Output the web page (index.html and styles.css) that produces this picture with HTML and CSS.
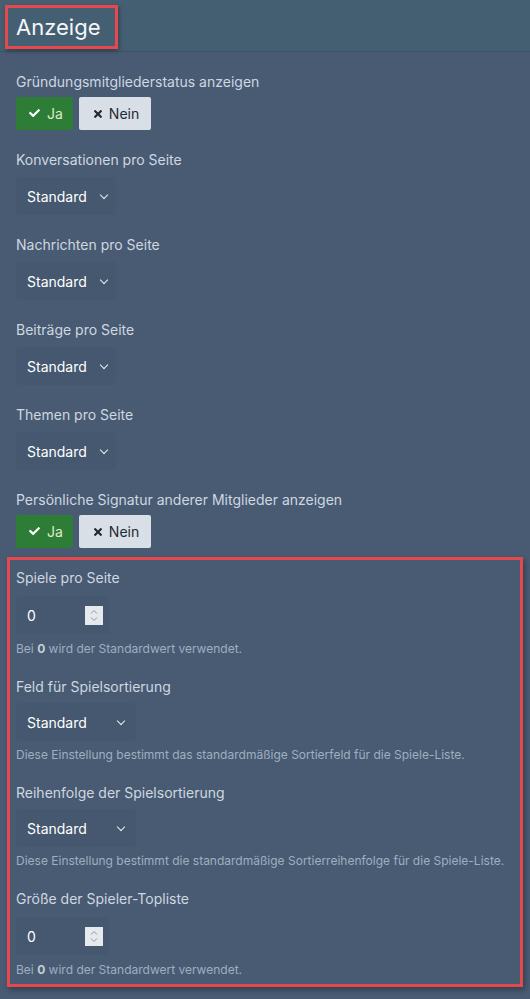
FILE: index.html
```html
<!DOCTYPE html>
<html lang="de">
<head>
    <meta charset="UTF-8">
    <meta name="viewport" content="width=device-width, initial-scale=1.0">
    <title>Anzeige</title>
    <link rel="stylesheet" href="styles.css">
</head>
<body>
<div class="block-header">
    <h2 class="marked-title">Anzeige</h2>
</div>

<div class="block-body">
    <div class="row">
        <div class="row-label">Gründungsmitgliederstatus anzeigen</div>
        <div class="toggle">
            <button type="button" class="btn btn-yes">
                <svg class="ico-check" viewBox="0 64 512 384"><path fill="currentColor" d="M173.9 439.4l-166.4-166.4c-10-10-10-26.2 0-36.2l36.2-36.2c10-10 26.2-10 36.2 0L192 312.7 432.1 72.6c10-10 26.2-10 36.2 0l36.2 36.2c10 10 10 26.2 0 36.2l-294.4 294.4c-10 10-26.2 10-36.2 0z"/></svg>
                Ja
            </button>
            <button type="button" class="btn btn-no">
                <svg class="ico-times" viewBox="0 80 352 352"><path fill="currentColor" d="M242.7 256l100.1-100.1c12.3-12.3 12.3-32.2 0-44.5l-22.2-22.2c-12.3-12.3-32.2-12.3-44.5 0L176 189.3 75.9 89.2c-12.3-12.3-32.2-12.3-44.5 0L9.2 111.5c-12.3 12.3-12.3 32.2 0 44.5L109.3 256 9.2 356.1c-12.3 12.3-12.3 32.2 0 44.5l22.2 22.2c12.3 12.3 32.2 12.3 44.5 0L176 322.7l100.1 100.1c12.3 12.3 32.2 12.3 44.5 0l22.2-22.2c12.3-12.3 12.3-32.2 0-44.5L242.7 256z"/></svg>
                Nein
            </button>
        </div>
    </div>

    <div class="row">
        <div class="row-label">Konversationen pro Seite</div>
        <div class="select">Standard <span class="chev"></span></div>
    </div>

    <div class="row">
        <div class="row-label">Nachrichten pro Seite</div>
        <div class="select">Standard <span class="chev"></span></div>
    </div>

    <div class="row">
        <div class="row-label">Beiträge pro Seite</div>
        <div class="select">Standard <span class="chev"></span></div>
    </div>

    <div class="row">
        <div class="row-label">Themen pro Seite</div>
        <div class="select">Standard <span class="chev"></span></div>
    </div>

    <div class="row row-last">
        <div class="row-label">Persönliche Signatur anderer Mitglieder anzeigen</div>
        <div class="toggle">
            <button type="button" class="btn btn-yes">
                <svg class="ico-check" viewBox="0 64 512 384"><path fill="currentColor" d="M173.9 439.4l-166.4-166.4c-10-10-10-26.2 0-36.2l36.2-36.2c10-10 26.2-10 36.2 0L192 312.7 432.1 72.6c10-10 26.2-10 36.2 0l36.2 36.2c10 10 10 26.2 0 36.2l-294.4 294.4c-10 10-26.2 10-36.2 0z"/></svg>
                Ja
            </button>
            <button type="button" class="btn btn-no">
                <svg class="ico-times" viewBox="0 80 352 352"><path fill="currentColor" d="M242.7 256l100.1-100.1c12.3-12.3 12.3-32.2 0-44.5l-22.2-22.2c-12.3-12.3-32.2-12.3-44.5 0L176 189.3 75.9 89.2c-12.3-12.3-32.2-12.3-44.5 0L9.2 111.5c-12.3 12.3-12.3 32.2 0 44.5L109.3 256 9.2 356.1c-12.3 12.3-12.3 32.2 0 44.5l22.2 22.2c12.3 12.3 32.2 12.3 44.5 0L176 322.7l100.1 100.1c12.3 12.3 32.2 12.3 44.5 0l22.2-22.2c12.3-12.3 12.3-32.2 0-44.5L242.7 256z"/></svg>
                Nein
            </button>
        </div>
    </div>

    <!-- neue Einstellungen (markiert) -->
    <div class="marked-box">
        <div class="row">
            <div class="row-label">Spiele pro Seite</div>
            <div class="number">
                <span class="number-value">0</span>
                <svg class="spin" viewBox="0 0 18 19"><rect width="18" height="19" fill="#e6eaee"/><path d="M6 7.5 L9 4.5 L12 7.5 M6 11.5 L9 14.5 L12 11.5" fill="none" stroke="#8d97a1" stroke-width="1"/></svg>
            </div>
            <div class="hint">Bei <b>0</b> wird der Standardwert verwendet.</div>
        </div>

        <div class="row">
            <div class="row-label">Feld für Spielsortierung</div>
            <div class="select select-wide">Standard <span class="chev"></span></div>
            <div class="hint">Diese Einstellung bestimmt das standardmäßige Sortierfeld für die Spiele-Liste.</div>
        </div>

        <div class="row">
            <div class="row-label">Reihenfolge der Spielsortierung</div>
            <div class="select select-wide">Standard <span class="chev"></span></div>
            <div class="hint">Diese Einstellung bestimmt die standardmäßige Sortierreihenfolge für die Spiele-Liste.</div>
        </div>

        <div class="row row-last">
            <div class="row-label">Größe der Spieler-Topliste</div>
            <div class="number">
                <span class="number-value">0</span>
                <svg class="spin" viewBox="0 0 18 19"><rect width="18" height="19" fill="#e6eaee"/><path d="M6 7.5 L9 4.5 L12 7.5 M6 11.5 L9 14.5 L12 11.5" fill="none" stroke="#8d97a1" stroke-width="1"/></svg>
            </div>
            <div class="hint">Bei <b>0</b> wird der Standardwert verwendet.</div>
        </div>
    </div>
</div>
</body>
</html>
```

FILE: styles.css
```css
body {
    font-family: Inter, "Noto Sans", sans-serif;
    background-color: #485b73;
    margin: 0;
    padding: 0;
    min-height: 999px;
}

.block-header {
    background-color: #445f72;
    border-bottom: 1px solid #3f5368;
    height: 52px;
    padding: 5px 0 0 5px;
    box-sizing: border-box;
}

.marked-title {
    display: inline-block;
    margin: 0;
    font-size: 22px;
    font-weight: 400;
    color: #f4f6f8;
    line-height: 38px;
    padding: 0 15px 0 8px;
    border: 3px solid #e5484d;
    box-shadow: 1px 2px 4px rgba(0, 0, 0, 0.35);
}

.block-body {
    padding: 20px 16px 0 16px;
}

.row {
    margin-bottom: 20px;
}

.row-last {
    margin-bottom: 9px;
}

.row-label {
    font-size: 14px;
    line-height: 20px;
    color: #cfd7e0;
    margin-bottom: 5px;
}

.toggle {
    display: flex;
    gap: 6px;
}

.btn {
    display: flex;
    align-items: center;
    height: 33px;
    border: none;
    border-radius: 2px;
    font-family: inherit;
    font-size: 14px;
    cursor: pointer;
}

.btn-yes {
    background-color: #2e7d37;
    color: #dcecc6;
    gap: 7px;
    padding: 0 10px 0 13px;
}

.btn-no {
    background-color: #d8dfe6;
    color: #1f2a35;
    gap: 7px;
    padding: 0 12px 0 15px;
}

.ico-check {
    width: 11px;
    height: 8.25px;
    color: #ffffff;
}

.ico-times {
    width: 8px;
    height: 8px;
}

.select {
    display: flex;
    align-items: center;
    width: 100px;
    height: 38px;
    box-sizing: border-box;
    margin-top: 7px;
    padding-left: 11px;
    font-size: 14px;
    color: #ffffff;
    background-color: rgba(40, 55, 75, 0.07);
    border-radius: 3px;
}

.select-wide {
    width: 120px;
    margin-top: 6px;
}

.chev {
    width: 5px;
    height: 5px;
    border-right: 1.5px solid #e8edf2;
    border-bottom: 1.5px solid #e8edf2;
    transform: rotate(45deg);
    margin-left: 14px;
    margin-top: -3px;
}

.select-wide .chev {
    margin-left: 31px;
}

.marked-box {
    border: 3px solid #e5484d;
    margin: 0 -9px;
    padding: 8px 6px 6px 6px;
    box-shadow: 2px 3px 5px rgba(0, 0, 0, 0.3);
}

.marked-box .row {
    margin-bottom: 20px;
}

.marked-box .row-last {
    margin-bottom: 0;
}

.select-wide + .hint {
    margin-top: 6px;
}

.number {
    display: flex;
    align-items: center;
    width: 94px;
    height: 38px;
    box-sizing: border-box;
    margin-top: 8px;
    padding: 0 7px 0 11px;
    font-size: 14px;
    color: #ffffff;
    background-color: rgba(40, 55, 75, 0.07);
    border-radius: 3px;
}

.number-value {
    flex: 1;
}

.spin {
    width: 18px;
    height: 19px;
}

.hint {
    font-size: 12px;
    line-height: 16px;
    color: #9eafc0;
    margin-top: 7px;
}

.hint b {
    color: #c3ceda;
}
```
